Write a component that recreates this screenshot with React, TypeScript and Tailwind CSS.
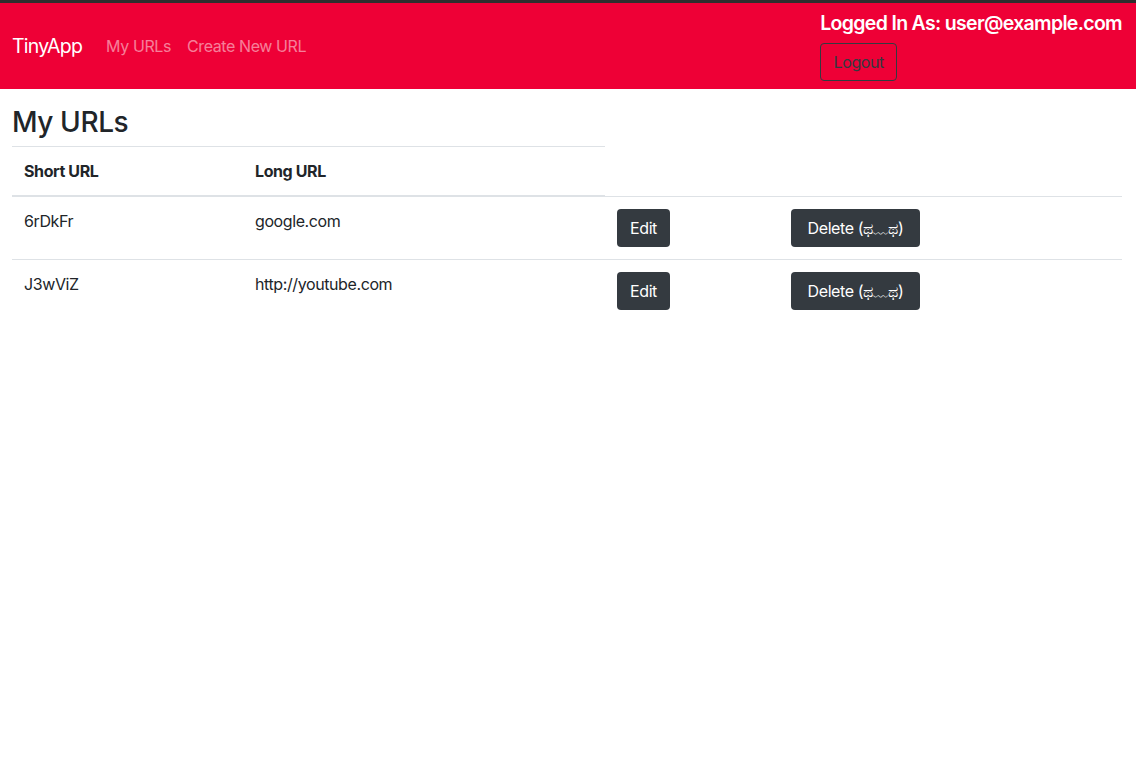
import React from "react";

const rows = [
  { short: "6rDkFr", long: "google.com" },
  { short: "J3wViZ", long: "http://youtube.com" },
];

export default function App() {
  return (
    <div
      className="min-h-[767px] bg-white text-[#212529] tracking-[-0.025em]"
      style={{ fontFamily: 'Inter, "Noto Sans", "DejaVu Sans", sans-serif' }}
    >
      <div className="h-[3px] bg-[#2e2e2e]" />
      <nav className="flex items-center bg-[#ee0036] pl-3 pr-[14px] py-2">
        <span className="text-[19.5px] leading-[30px] text-white mr-6 tracking-[-0.04em]">TinyApp</span>
        <div className="flex items-center gap-4 text-[16px] text-white/50">
          <span>My URLs</span>
          <span>Create New URL</span>
        </div>
        <div className="ml-auto flex flex-col items-start">
          <div className="text-[19.5px] leading-[24px] font-semibold text-white tracking-[-0.035em]">
            Logged In As: user@example.com
          </div>
          <button className="mt-2 h-[38px] w-[77px] border border-[#343a40] rounded text-[16px] text-[#343a40]">
            Logout
          </button>
        </div>
      </nav>
      <div className="px-3">
        <h3 className="mt-4 mb-[7px] text-[28px] leading-[34px] font-medium">My URLs</h3>
        <table className="w-[1110px] border-collapse text-[16px]">
          <thead>
            <tr>
              <th className="w-[231px] text-left font-bold p-3 leading-6 border-t border-b-2 border-[#dee2e6]">
                Short URL
              </th>
              <th className="w-[362px] text-left font-bold p-3 leading-6 border-t border-b-2 border-[#dee2e6]">
                Long URL
              </th>
            </tr>
          </thead>
          <tbody>
            {rows.map((r) => (
              <tr key={r.short}>
                <td className="w-[231px] align-top p-3 leading-6 border-t border-[#dee2e6]">{r.short}</td>
                <td className="w-[362px] align-top p-3 leading-6 border-t border-[#dee2e6]">{r.long}</td>
                <td className="w-[174px] align-top p-3 border-t border-[#dee2e6]">
                  <button className="h-[38px] w-[53px] rounded bg-[#343a40] text-white text-[16px]">Edit</button>
                </td>
                <td className="align-top p-3 border-t border-[#dee2e6]">
                  <button className="h-[38px] w-[129px] rounded bg-[#343a40] text-white text-[16px]">
                    Delete (ಥ﹏ಥ)
                  </button>
                </td>
              </tr>
            ))}
          </tbody>
        </table>
      </div>
    </div>
  );
}
